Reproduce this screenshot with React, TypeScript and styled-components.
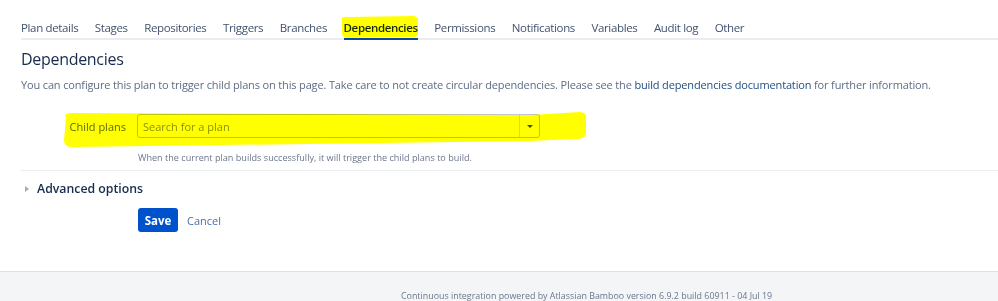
import React from "react";
import styled, { createGlobalStyle } from "styled-components";

const GlobalStyle = createGlobalStyle`
  html, body { margin: 0; padding: 0; background: #ffffff; }
  body { font-family: "Open Sans", "Noto Sans", sans-serif; color: #172b4d; }
`;

const Page = styled.div`
  width: 998px;
  height: 301px;
  overflow: hidden;
  display: flex;
  flex-direction: column;
  position: relative;
`;

const Main = styled.main`
  padding-left: 21px;
  height: 271px;
  flex-shrink: 0;
  box-sizing: border-box;
`;

const TabBar = styled.nav`
  display: flex;
  gap: 16.5px;
  padding-top: 20px;
  border-bottom: 2px solid #ebecf0;
`;

const Tab = styled.span<{ $active?: boolean }>`
  font-size: 11.5px;
  line-height: 16px;
  padding-bottom: 2px;
  color: ${(p) => (p.$active ? "#172b4d" : "#42526e")};
  font-weight: ${(p) => (p.$active ? 600 : 500)};
  border-bottom: 2px solid ${(p) => (p.$active ? "#0747a6" : "transparent")};
  margin-bottom: -2px;
  letter-spacing: -0.35px;
  white-space: nowrap;
`;

const Heading = styled.h2`
  margin: 8px 0 0;
  font-size: 16px;
  line-height: 22px;
  font-weight: 500;
  letter-spacing: -0.3px;
  color: #172b4d;
`;

const Description = styled.p`
  margin: 7px 0 0;
  font-size: 11px;
  line-height: 16px;
  color: #5e6c84;
  letter-spacing: -0.15px;
  white-space: nowrap;
`;

const Link = styled.a`
  color: #205081;
  text-decoration: none;
`;

const FieldRow = styled.div`
  display: flex;
  align-items: center;
  margin-top: 21px;
`;

const Label = styled.label`
  width: 105px;
  text-align: right;
  padding-right: 11px;
  font-size: 11px;
  color: #5e6c84;
`;

const Select = styled.div`
  width: 403px;
  height: 24px;
  box-sizing: border-box;
  border: 1px solid #c1c7d0;
  border-radius: 3px;
  display: flex;
  align-items: center;
  background: #ffffff;
`;

const Placeholder = styled.span`
  flex: 1;
  padding-left: 5px;
  font-size: 11px;
  color: #8993a4;
`;

const ArrowCell = styled.span`
  width: 19px;
  height: 100%;
  border-left: 1px solid #dfe1e6;
  display: flex;
  align-items: center;
  justify-content: center;
`;

const Arrow = styled.span`
  width: 0;
  height: 0;
  border-left: 3px solid transparent;
  border-right: 3px solid transparent;
  border-top: 3px solid #42526e;
`;

const Help = styled.div`
  margin: 13px 0 0 117px;
  font-size: 9.1px;
  line-height: 13px;
  color: #6b778c;
`;

const Divider = styled.hr`
  margin: 6px 0 0;
  border: 0;
  border-top: 1px solid #ebecf0;
`;

const Advanced = styled.div`
  display: flex;
  align-items: center;
  gap: 8px;
  margin-top: 9px;
  padding-left: 4px;
  font-size: 12.3px;
  line-height: 18px;
  font-weight: 600;
  color: #172b4d;
`;

const Caret = styled.span`
  width: 0;
  height: 0;
  border-top: 3.5px solid transparent;
  border-bottom: 3.5px solid transparent;
  border-left: 4px solid #a5adba;
`;

const Actions = styled.div`
  display: flex;
  align-items: center;
  gap: 9px;
  margin: 10px 0 0 117px;
`;

const SaveButton = styled.button`
  height: 24px;
  width: 40px;
  padding: 0;
  border: 0;
  border-radius: 3px;
  background: #0052cc;
  color: #ffffff;
  font-family: inherit;
  font-size: 11.5px;
  font-weight: 700;
`;

const CancelLink = styled.a`
  font-size: 11px;
  color: #4a6fa5;
`;

const Footer = styled.footer`
  flex: 1;
  background: #f4f5f7;
  border-top: 1px solid #dfe1e6;
  display: flex;
  padding-top: 18px;
  padding-left: 401px;
  font-size: 8.9px;
  line-height: 12px;
  color: #6b778c;
  white-space: nowrap;
`;

const Highlight = styled.svg`
  position: absolute;
  mix-blend-mode: multiply;
  pointer-events: none;
`;

const tabs = [
  "Plan details",
  "Stages",
  "Repositories",
  "Triggers",
  "Branches",
  "Dependencies",
  "Permissions",
  "Notifications",
  "Variables",
  "Audit log",
  "Other",
];

export default function App() {
  return (
    <>
      <GlobalStyle />
      <Page>
        <Main>
          <TabBar>
            {tabs.map((t) => (
              <Tab key={t} $active={t === "Dependencies"}>
                {t}
              </Tab>
            ))}
          </TabBar>
          <Heading>Dependencies</Heading>
          <Description>
            You can configure this plan to trigger child plans on this page. Take care to not create circular
            dependencies. Please see the <Link href="#">build dependencies documentation</Link> for further
            information.
          </Description>
          <FieldRow>
            <Label>Child plans</Label>
            <Select>
              <Placeholder>Search for a plan</Placeholder>
              <ArrowCell>
                <Arrow />
              </ArrowCell>
            </Select>
          </FieldRow>
          <Help>When the current plan builds successfully, it will trigger the child plans to build.</Help>
          <Divider />
          <Advanced>
            <Caret />
            Advanced options
          </Advanced>
          <Actions>
            <SaveButton>Save</SaveButton>
            <CancelLink>Cancel</CancelLink>
          </Actions>
        </Main>
        <Footer>Continuous integration powered by Atlassian Bamboo version 6.9.2 build 60911 - 04 Jul 19</Footer>
        <Highlight style={{ left: 340, top: 15 }} width="80" height="24" viewBox="0 0 80 24">
          <path d="M2 5 Q1 1 8 2 L74 1 Q79 2 78 8 L78 19 Q77 23 72 22 L6 23 Q2 22 2 18 Z" fill="#ffff00" />
        </Highlight>
        <Highlight style={{ left: 60, top: 110 }} width="530" height="40" viewBox="0 0 530 40">
          <path
            d="M6 8 Q3 3 12 3 L470 5 L520 2 Q527 2 526 10 L526 24 Q525 29 516 29 L470 31 L14 37 Q4 38 4 30 Z"
            fill="#ffff00"
          />
        </Highlight>
      </Page>
    </>
  );
}
